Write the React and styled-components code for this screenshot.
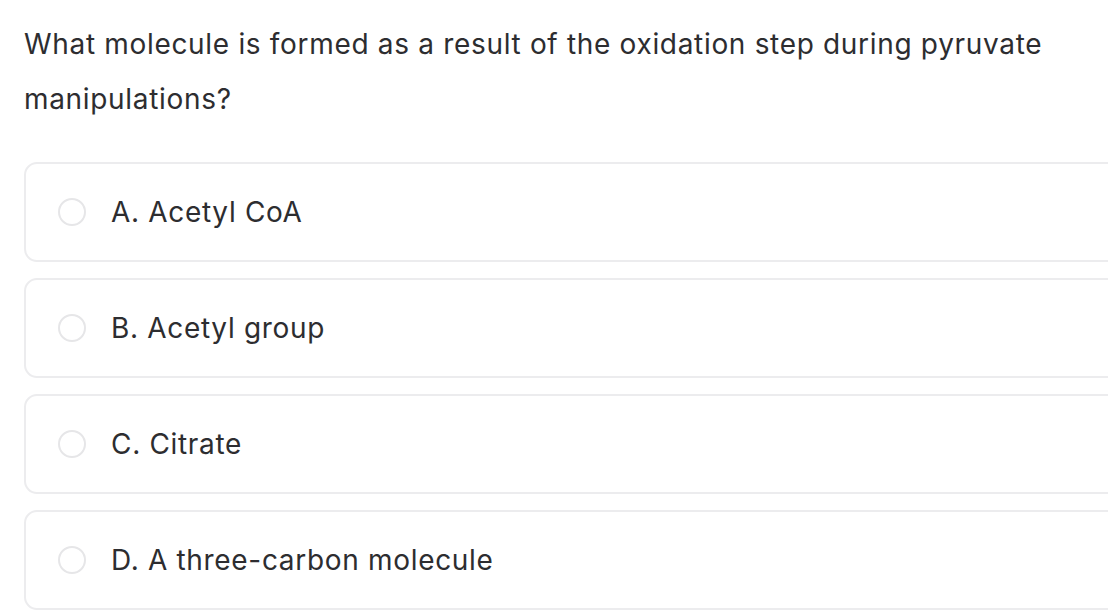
import React from "react";
import styled, { createGlobalStyle } from "styled-components";

const GlobalStyle = createGlobalStyle`
  html, body { margin: 0; padding: 0; background: #ffffff; overflow: hidden; }
  * { box-sizing: border-box; }
`;

const Page = styled.main`
  padding: 17px 0 0 24px;
  font-family: Inter, "Noto Sans", sans-serif;
  color: #2d2d30;
  width: 1130px;
`;

const Question = styled.h1`
  margin: 0;
  font-size: 28px;
  font-weight: 400;
  line-height: 55px;
  letter-spacing: 0.68px;
  width: 1060px;
`;

const Options = styled.ul`
  list-style: none;
  margin: 35px 0 0 0;
  padding: 0;
  display: flex;
  flex-direction: column;
  gap: 16px;
`;

const Option = styled.li`
  display: flex;
  align-items: center;
  gap: 25px;
  height: 100px;
  padding-left: 32px;
  border: 2px solid #ececee;
  border-radius: 13px;
  background: #ffffff;
  cursor: pointer;
`;

const Radio = styled.span`
  flex: none;
  width: 28px;
  height: 28px;
  border-radius: 50%;
  border: 2px solid #e6e6e8;
  background: #ffffff;
`;

const Label = styled.span`
  font-size: 28px;
  line-height: 34px;
  letter-spacing: 0.68px;
  color: #2d2d30;
`;

const options = [
  "A. Acetyl CoA",
  "B. Acetyl group",
  "C. Citrate",
  "D. A three-carbon molecule",
];

export default function App() {
  return (
    <>
      <GlobalStyle />
      <Page>
        <Question>
          What molecule is formed as a result of the oxidation step during pyruvate manipulations?
        </Question>
        <Options>
          {options.map((o) => (
            <Option key={o}>
              <Radio />
              <Label>{o}</Label>
            </Option>
          ))}
        </Options>
      </Page>
    </>
  );
}
